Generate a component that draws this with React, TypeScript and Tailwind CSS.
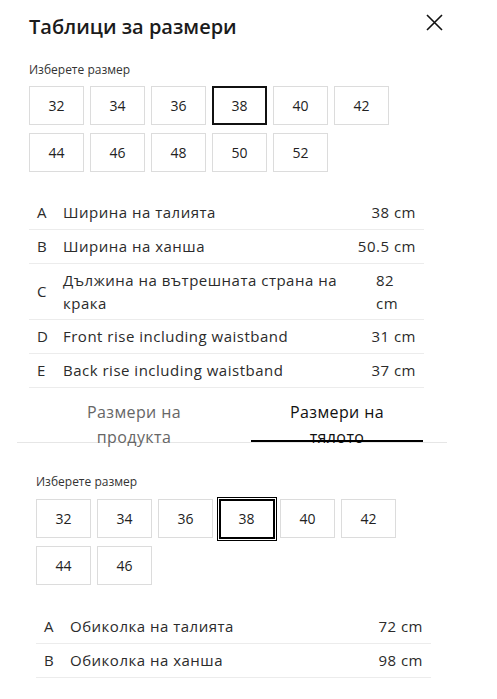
import React from 'react';

const FONT = "font-['Open_Sans',_'Liberation_Sans',_sans-serif]";

const SIZES_1 = ['32', '34', '36', '38', '40', '42', '44', '46', '48', '50', '52'];
const SIZES_2 = ['32', '34', '36', '38', '40', '42', '44', '46'];

const PRODUCT_ROWS = [
  { key: 'A', label: 'Ширина на талията', value: '38 cm' },
  { key: 'B', label: 'Ширина на ханша', value: '50.5 cm' },
  { key: 'C', label: 'Дължина на вътрешната страна на крака', value: '82 cm', wrap: true },
  { key: 'D', label: 'Front rise including waistband', value: '31 cm' },
  { key: 'E', label: 'Back rise including waistband', value: '37 cm' },
];

const BODY_ROWS = [
  { key: 'A', label: 'Обиколка на талията', value: '72 cm' },
  { key: 'B', label: 'Обиколка на ханша', value: '98 cm' },
];

function SizeGrid({ sizes, selected, double }: { sizes: string[]; selected: string; double?: boolean }) {
  return (
    <div className="flex flex-wrap gap-x-[6px] gap-y-[8px] w-[380px]">
      {sizes.map((s) => {
        const active = s === selected;
        if (active && double) {
          return (
            <div key={s} className="w-[55px] h-[39px] flex items-center justify-center">
              <div className="w-[60px] h-[44px] shrink-0 border border-black p-[1px]">
                <div className="w-full h-full border-2 border-black flex items-center justify-center text-[14px] text-[#222]">
                  {s}
                </div>
              </div>
            </div>
          );
        }
        return (
          <div
            key={s}
            className={
              active
                ? 'w-[55px] h-[39px] flex items-center justify-center border-2 border-[#111] text-[14px] text-[#222]'
                : 'w-[55px] h-[39px] flex items-center justify-center border border-[#dcdcdc] text-[14px] text-[#222]'
            }
          >
            {s}
          </div>
        );
      })}
    </div>
  );
}

function MeasureTable({ rows }: { rows: { key: string; label: string; value: string; wrap?: boolean }[] }) {
  return (
    <div className="w-[395px] flex flex-col text-[15px] tracking-[0.5px] text-[#2b2b2b]">
      {rows.map((r) => (
        <div
          key={r.key}
          className={
            r.wrap
              ? 'flex items-center border-b border-[#ececec] h-[56px]'
              : 'flex items-center border-b border-[#ececec] h-[34px]'
          }
        >
          <span className="w-[34px] pl-[8px] shrink-0">{r.key}</span>
          <span className="flex-1 leading-[23px] pr-[12px]">{r.label}</span>
          {r.wrap ? (
            <span className="w-[48px] shrink-0 leading-[23px] pr-[8px]">
              82
              <br />
              cm
            </span>
          ) : (
            <span className="shrink-0 pr-[8px] text-right">{r.value}</span>
          )}
        </div>
      ))}
    </div>
  );
}

export default function App() {
  return (
    <div className={`w-[497px] min-h-[699px] bg-white ${FONT} overflow-hidden`}>
      <div className="pl-[29px] pr-[54px] pt-[12px]">
        <div className="flex items-start justify-between">
          <h1 className="text-[20px] font-semibold text-[#1b1b1b] leading-[30px]">Таблици за размери</h1>
          <svg width="17" height="17" viewBox="0 0 17 17" className="mt-[2px]">
            <path d="M1 1 L16 16 M16 1 L1 16" stroke="#111" strokeWidth="1.6" fill="none" />
          </svg>
        </div>
        <p className="mt-[20px] text-[12px] text-[#333] leading-[16px]">Изберете размер</p>
        <div className="mt-[8px]">
          <SizeGrid sizes={SIZES_1} selected="38" />
        </div>
        <div className="mt-[24px]">
          <MeasureTable rows={PRODUCT_ROWS} />
        </div>
      </div>

      <div className="mt-[2px] mx-[17px] w-[430px] flex border-b border-[#e6e6e6] h-[53px]">
        <button className="w-[234px] text-[16px] tracking-[0.4px] text-[#666] leading-[25px] pt-[10px] text-center">
          Размери на
          <br />
          продукта
        </button>
        <div className="relative w-[172px] h-full">
          <button className="w-full text-[16px] tracking-[0.4px] text-[#111] leading-[25px] pt-[10px] text-center">
            Размери на
            <br />
            тялото
          </button>
          <div className="absolute left-0 right-0 bottom-0 h-[2px] bg-black"></div>
        </div>
      </div>

      <div className="pl-[36px] pt-[31px] pb-[20px]">
        <p className="text-[12px] text-[#333] leading-[16px]">Изберете размер</p>
        <div className="mt-[9px]">
          <SizeGrid sizes={SIZES_2} selected="38" double />
        </div>
        <div className="mt-[25px]">
          <MeasureTable rows={BODY_ROWS} />
        </div>
      </div>
    </div>
  );
}
